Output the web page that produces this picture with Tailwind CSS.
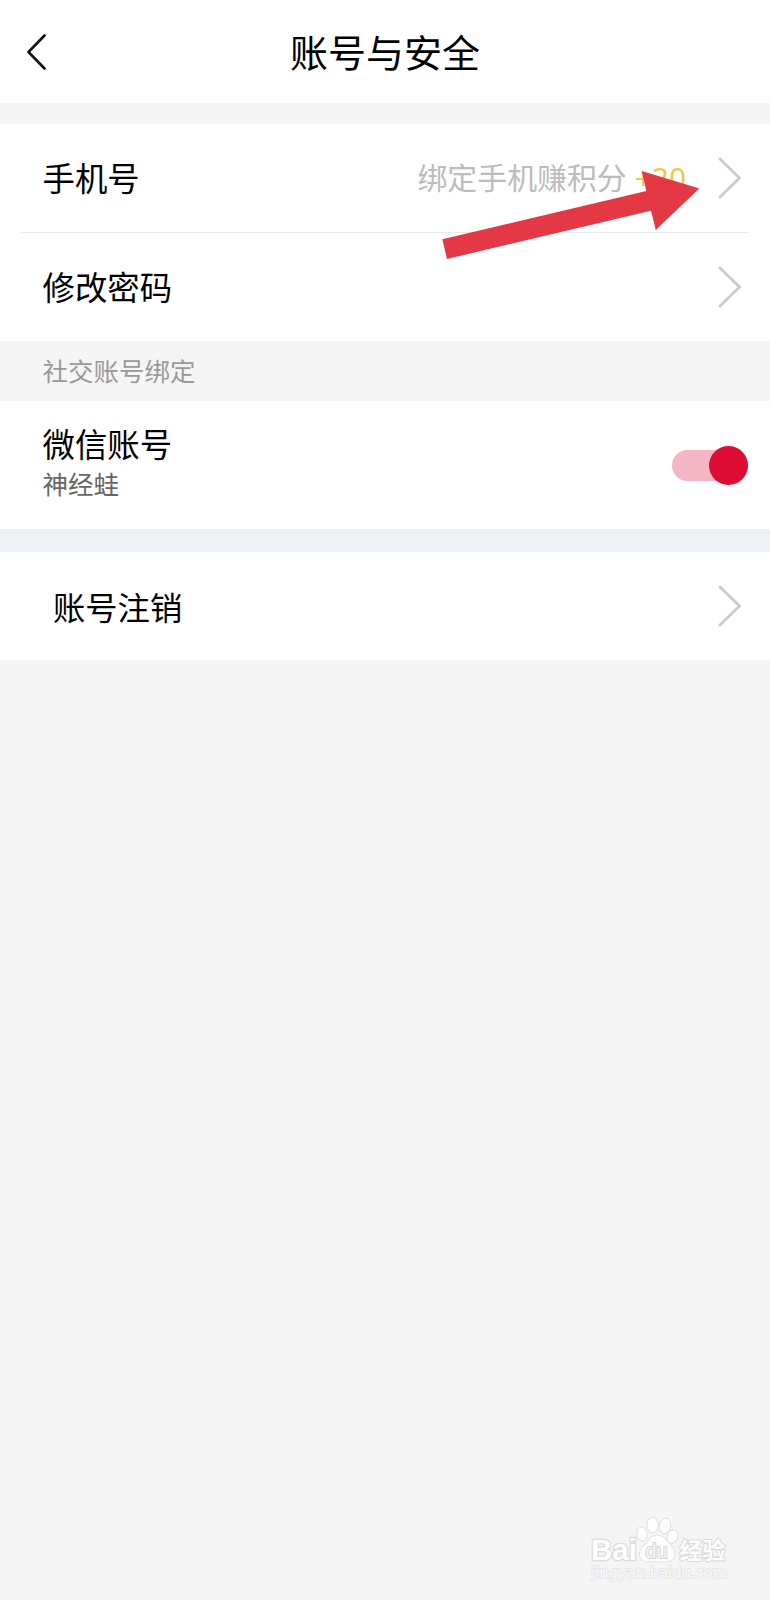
<!DOCTYPE html>
<html lang="zh-CN">
<head>
    <meta charset="UTF-8">
    <meta name="viewport" content="width=device-width, initial-scale=1.0">
    <title>账号与安全</title>
    <!-- Tailwind CSS CDN -->
    <script src="https://cdn.jsdelivr.net/npm/@tailwindcss/browser@4"></script>
</head>
<body class="relative h-[1600px] overflow-hidden bg-[#f5f5f5] font-['Noto_Sans_CJK_SC',sans-serif] text-black">

    <!-- Header -->
    <header class="grid h-[103px] grid-cols-[1fr_auto_1fr] items-center bg-white">
        <svg class="ml-[26px] h-[38px] w-5" viewBox="0 0 20 38" fill="none" stroke="#111" stroke-width="2.6" stroke-linecap="round" stroke-linejoin="round">
            <path d="M18.5 2.5 2.5 19l16 16.5" />
        </svg>
        <h1 class="pb-[2px] text-[38px] leading-[56px]">账号与安全</h1>
    </header>

    <main>
        <!-- Phone and password -->
        <section class="mt-[21px] bg-white">
            <div class="mx-[21px] flex h-[109px] items-center border-b border-[#e9e9e9] pr-[7px] pl-[21.5px]">
                <span class="pb-[2px] text-[32.4px] leading-[48px]">手机号</span>
                <span class="ml-auto pb-[2px] text-[29.9px] leading-[48px] text-[#bcbcbc]">绑定手机赚积分<span class="ml-2 font-['Noto_Sans'] text-[#f3c552]">+20</span></span>
                <svg class="ml-8 h-[42px] w-6" viewBox="0 0 24 42" fill="none" stroke="#cbcbcb" stroke-width="3" stroke-linecap="round" stroke-linejoin="round">
                    <path d="M2 2 21.5 21 2 40" />
                </svg>
            </div>
            <div class="mx-[21px] flex h-[108px] items-center justify-between pr-[7px] pl-[21.5px]">
                <span class="pb-[2px] text-[32.4px] leading-[48px]">修改密码</span>
                <svg class="h-[42px] w-6" viewBox="0 0 24 42" fill="none" stroke="#cbcbcb" stroke-width="3" stroke-linecap="round" stroke-linejoin="round">
                    <path d="M2 2 21.5 21 2 40" />
                </svg>
            </div>
        </section>

        <!-- Social accounts -->
        <h2 class="flex h-[60px] items-center pb-[2px] pl-[42.5px] text-[25.5px] text-[#999]">社交账号绑定</h2>
        <section class="flex h-[128px] items-center justify-between bg-white pr-[22.5px] pl-[42.5px]">
            <div class="flex flex-col pb-[8px]">
                <span class="text-[32.4px] leading-[42px]">微信账号</span>
                <span class="text-[25.5px] leading-[37px] text-[#666]">神经蛙</span>
            </div>
            <div class="flex h-[31px] w-[76px] items-center justify-end rounded-full bg-[#f4b6c5]">
                <div class="size-[39px] shrink-0 rounded-full bg-[#dc0c35]"></div>
            </div>
        </section>

        <!-- Close account -->
        <section class="border-t-[23px] border-[#edf1f5] bg-white">
            <div class="flex h-[108px] items-center justify-between pr-7 pl-[53px]">
                <span class="pb-px text-[32.3px] leading-[48px]">账号注销</span>
                <svg class="h-[42px] w-6" viewBox="0 0 24 42" fill="none" stroke="#cbcbcb" stroke-width="3" stroke-linecap="round" stroke-linejoin="round">
                    <path d="M2 2 21.5 21 2 40" />
                </svg>
            </div>
        </section>
    </main>

    <!-- Pointer arrow -->
    <svg class="absolute top-[165px] left-[440px] h-[100px] w-[262px]" viewBox="440 165 262 100" fill="#e43945">
        <path d="M442.3 239.3 646.3 191 641.7 171 699.3 188.5 655.8 230 651 210.8 447 259Z" />
    </svg>

    <!-- Watermark -->
    <svg class="absolute top-[1510px] left-[585px] h-[75px] w-[150px]" viewBox="585 1510 150 75" fill="#fdfdfd" stroke="#dcdcdc" stroke-width="1.6" paint-order="stroke">
        <g font-family="Liberation Sans, sans-serif" font-weight="700">
            <text x="591" y="1560" font-size="30" textLength="46" lengthAdjust="spacingAndGlyphs" stroke-width="2.6">Bai</text>
            <path d="M657 1535.5c6 0 9 4 12 8 4 4 6 7 5.5 11-.6 5-4 7-9 7-5 0-12-.8-17 0-5 .3-8.5-2-8.5-7 0-5 3-8 6.5-11 3-4 5-8 10.5-8Z" />
            <ellipse cx="642" cy="1534" rx="4.6" ry="6.7" transform="rotate(-12 642 1534)" />
            <ellipse cx="652.5" cy="1525" rx="5.2" ry="7.4" />
            <ellipse cx="665" cy="1526" rx="5.2" ry="7.4" transform="rotate(12 665 1526)" />
            <ellipse cx="672.5" cy="1536.5" rx="5" ry="6.5" transform="rotate(20 672.5 1536.5)" />
            <text x="645.5" y="1557.5" font-size="20" font-weight="400" textLength="22" lengthAdjust="spacingAndGlyphs" fill="#f5f5f5" stroke="#d6d6d6" stroke-width="2">du</text>
        </g>
        <text x="679.5" y="1558.5" font-size="23" font-weight="700" textLength="46" lengthAdjust="spacingAndGlyphs" font-family="Noto Sans CJK SC, sans-serif" stroke-width="2.2">经验</text>
        <text x="591" y="1578" font-size="15.5" textLength="136" lengthAdjust="spacingAndGlyphs" font-family="DejaVu Sans, sans-serif" fill="#fafafa" stroke="#e3e3e3">jingyan.baidu.com</text>
    </svg>
</body>
</html>
